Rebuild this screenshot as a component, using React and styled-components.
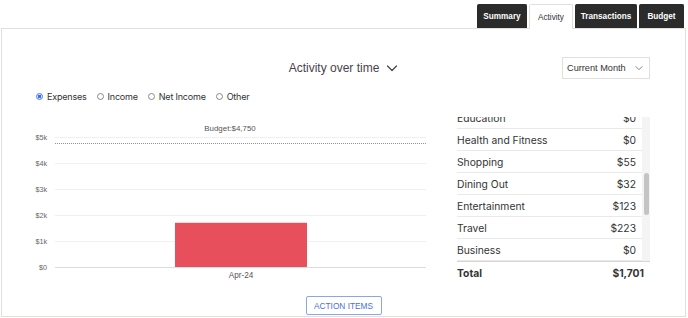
import React from "react";
import styled, { createGlobalStyle } from "styled-components";

const GlobalStyle = createGlobalStyle`
  html, body {
    margin: 0;
    padding: 0;
    background: #fff;
    font-family: Inter, "Liberation Sans", Arial, sans-serif;
  }
`;

const tabs = [
  { label: "Summary", width: 50 },
  { label: "Activity", width: 44, active: true },
  { label: "Transactions", width: 62 },
  { label: "Budget", width: 45 },
];
const options = ["Expenses", "Income", "Net Income", "Other"];

const rows = [
  ["Education", "$0"],
  ["Health and Fitness", "$0"],
  ["Shopping", "$55"],
  ["Dining Out", "$32"],
  ["Entertainment", "$123"],
  ["Travel", "$223"],
  ["Business", "$0"],
];

const ticks = ["$5k", "$4k", "$3k", "$2k", "$1k", "$0"];

const Page = styled.div`
  width: 688px;
  height: 318px;
  overflow: hidden;
`;

const TabBar = styled.div`
  display: flex;
  justify-content: flex-end;
  gap: 2px;
  padding: 4px 4px 0 0;
  height: 24px;
`;

const Tab = styled.div`
  width: ${(p) => p.$width}px;
  box-sizing: border-box;
  display: flex;
  align-items: center;
  justify-content: center;
  border-radius: 2px 2px 0 0;
  font-family: "Liberation Sans", Arial, sans-serif;
  font-size: 8.2px;
  font-weight: ${(p) => (p.$active ? 400 : 700)};
  color: ${(p) => (p.$active ? "#333" : "#fff")};
  background: ${(p) => (p.$active ? "#fff" : "#2b2b2b")};
  border: 1px solid ${(p) => (p.$active ? "#e2ded8" : "#2b2b2b")};
  border-bottom: none;
  margin-bottom: ${(p) => (p.$active ? "-1px" : "0")};
  position: relative;
  z-index: 1;
`;

const Card = styled.div`
  margin-left: 1px;
  width: 685px;
  height: 289px;
  border: 1px solid #e2ded8;
  box-sizing: border-box;
  display: flex;
  flex-direction: column;
`;

const Header = styled.div`
  display: grid;
  grid-template-columns: 1fr auto 1fr;
  align-items: center;
  padding: 28px 35px 0 35px;
  height: 22px;
`;

const Title = styled.div`
  grid-column: 2;
  display: flex;
  align-items: center;
  gap: 7px;
  font-family: "Liberation Sans", Arial, sans-serif;
  font-size: 12px;
  color: #4a3f50;
`;

const Select = styled.div`
  grid-column: 3;
  justify-self: end;
  width: 88px;
  height: 22px;
  box-sizing: border-box;
  border: 1px solid #e2ded8;
  display: flex;
  align-items: center;
  justify-content: space-between;
  padding: 0 6px 0 4px;
  white-space: nowrap;
  font-family: "Liberation Sans", Arial, sans-serif;
  font-size: 9.2px;
  color: #333;
`;

const Radios = styled.div`
  display: flex;
  align-items: center;
  gap: 10px;
  padding: 11px 0 0 34px;
  height: 12px;
`;

const RadioItem = styled.label`
  display: flex;
  align-items: center;
  gap: 4px;
  font-size: 9px;
  letter-spacing: -0.2px;
  color: #333;
`;

const RadioDot = styled.span`
  width: 7px;
  height: 7px;
  border-radius: 50%;
  box-sizing: border-box;
  border: 1px solid ${(p) => (p.$on ? "#4a7de6" : "#8a8a8a")};
  background: ${(p) => (p.$on ? "radial-gradient(circle, #3b6fe0 45%, #dfe8fb 55%)" : "#fff")};
`;

const Content = styled.div`
  display: grid;
  grid-template-columns: 400px 193px;
  gap: 27px;
  padding: 11px 0 0 28px;
`;

const ChartSvg = styled.svg`
  display: block;
  font-family: "Liberation Sans", Arial, sans-serif;
`;

const TableWrap = styled.div`
  margin-top: 4px;
  font-size: 10.3px;
  color: #333;
`;

const ScrollArea = styled.div`
  display: flex;
  height: 144px;
`;

const List = styled.div`
  flex: 1;
  overflow: hidden;
`;

const Track = styled.div`
  width: 8px;
  background: #f4f4f4;
  display: flex;
  justify-content: center;
`;

const Thumb = styled.div`
  width: 5px;
  height: 42px;
  margin-top: 56px;
  border-radius: 3px;
  background: #c4c4c4;
`;

const Row = styled.div`
  display: flex;
  justify-content: space-between;
  align-items: center;
  height: 22px;
  box-sizing: border-box;
  padding-right: 6px;
  border-bottom: 1px solid #e9e9e9;
`;

const TotalRow = styled(Row)`
  border-top: 1px solid #d9d5cf;
  border-bottom: none;
  font-weight: 700;
  height: 23px;
`;

const Footer = styled.div`
  display: flex;
  justify-content: center;
  margin-top: auto;
  padding-bottom: 1px;
`;

const ActionButton = styled.button`
  width: 76px;
  height: 19px;
  border: 1px solid #8aa6e6;
  border-radius: 2px;
  background: #fff;
  color: #4a6fdc;
  font-family: "Liberation Sans", Arial, sans-serif;
  font-size: 8.3px;
  padding: 0;
`;

const Chevron = ({ size = 12, color = "#4a3f50", width = 1.2 }) => (
  <svg width={size} height={size} viewBox="0 0 12 12" fill="none">
    <path d="M1.5 4l4.5 4.5 4.5-4.5" stroke={color} strokeWidth={width} strokeLinecap="round" strokeLinejoin="round" />
  </svg>
);

const Chart = () => {
  const top = 24;
  const step = 26;
  const base = top + step * 5;
  const budgetY = base - 4.75 * step;
  const barTop = base - 1.701 * step;
  return (
    <ChartSvg width="400" height="172">
      {ticks.map((t, i) => (
        <g key={t}>
          <line x1="25" x2="396" y1={top + i * step + 0.5} y2={top + i * step + 0.5} stroke={i === 5 ? "#dcdcdc" : "#f0f0f0"} strokeWidth="1" />
          <text x="17" y={top + i * step + 3} fontSize="7.2" fill="#666" textAnchor="end">{t}</text>
        </g>
      ))}
      <line x1="25" x2="396" y1={budgetY} y2={budgetY} stroke="#777" strokeWidth="0.8" strokeDasharray="1 1" />
      <text x="200" y="18" fontSize="7.9" fill="#555" textAnchor="middle">Budget:$4,750</text>
      <rect x="145" y={barTop} width="132" height={base - barTop} fill="#e84f5d" />
      <text x="211" y="165" fontSize="8.2" fill="#555" textAnchor="middle">Apr-24</text>
    </ChartSvg>
  );
};

export default function App() {
  return (
    <Page>
      <GlobalStyle />
      <TabBar>
        {tabs.map((t) => (
          <Tab key={t.label} $active={t.active} $width={t.width}>
            {t.label}
          </Tab>
        ))}
      </TabBar>
      <Card>
        <Header>
          <Title>
            Activity over time
            <Chevron />
          </Title>
          <Select>
            Current Month
            <Chevron size={8} color="#555" width={1.1} />
          </Select>
        </Header>
        <Radios>
          {options.map((o, i) => (
            <RadioItem key={o}>
              <RadioDot $on={i === 0} />
              {o}
            </RadioItem>
          ))}
        </Radios>
        <Content>
          <Chart />
          <TableWrap>
            <ScrollArea>
              <List ref={(el) => el && (el.scrollTop = 10)}>
                {rows.map(([name, value]) => (
                  <Row key={name}>
                    <span>{name}</span>
                    <span>{value}</span>
                  </Row>
                ))}
              </List>
              <Track>
                <Thumb />
              </Track>
            </ScrollArea>
            <TotalRow>
              <span>Total</span>
              <span>$1,701</span>
            </TotalRow>
          </TableWrap>
        </Content>
        <Footer>
          <ActionButton>ACTION ITEMS</ActionButton>
        </Footer>
      </Card>
    </Page>
  );
}
